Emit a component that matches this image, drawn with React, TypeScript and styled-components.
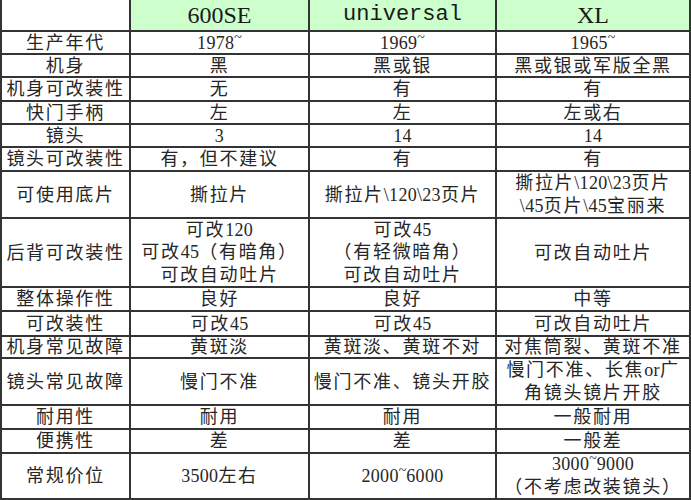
import React from "react";
import styled, { createGlobalStyle } from "styled-components";

const GlobalStyle = createGlobalStyle`
  html, body {
    margin: 0;
    padding: 0;
    background: #ffffff;
  }
`;

const Sheet = styled.div`
  width: 691px;
  box-sizing: border-box;
  display: flex;
  flex-direction: column;
  gap: 2px;
  padding: 0 2px 2px 2px;
  background: #333333;
  font-family: "Liberation Serif", "Noto Sans CJK SC", serif;
  color: #262626;
`;

const Row = styled.div<{ $h: number }>`
  display: grid;
  grid-template-columns: 127px 177px 185px 192px;
  grid-template-rows: ${(p) => p.$h}px;
  gap: 2px;
  height: ${(p) => p.$h}px;
`;

const Cell = styled.div<{ $lines: number }>`
  display: flex;
  flex-direction: column;
  align-items: center;
  justify-content: center;
  min-height: 0;
  text-align: center;
  white-space: nowrap;
  overflow: visible;
  background: #ffffff;
  font-size: 18px;
  letter-spacing: 1.7px;
  line-height: ${(p) => (p.$lines >= 3 ? 22.5 : p.$lines === 2 ? 23 : 20)}px;
`;

const HeadCell = styled.div<{ $green: boolean; $mono?: boolean }>`
  display: flex;
  align-items: center;
  justify-content: center;
  background: ${(p) => (p.$green ? "#ccffcc" : "#ffffff")};
  font-family: ${(p) =>
    p.$mono ? '"Liberation Mono", monospace' : '"Liberation Serif", serif'};
  font-size: ${(p) => (p.$mono ? "22px" : "24px")};
  line-height: 30px;
  color: #1a1a1a;
`;

const Line = styled.span`
  display: block;
`;

const Latin = styled.span`
  letter-spacing: 0.3px;
`;

const Tilde = styled.span`
  display: inline-block;
  vertical-align: 0.5em;
  font-size: 14px;
  line-height: 0;
  letter-spacing: 0;
`;

type RowData = { h: number; cells: string[] };

const header = { h: 30, cells: ["", "600SE", "universal", "XL"] };

const rows: RowData[] = [
  { h: 21, cells: ["生产年代", "1978~", "1969~", "1965~"] },
  { h: 21, cells: ["机身", "黑", "黑或银", "黑或银或军版全黑"] },
  { h: 22, cells: ["机身可改装性", "无", "有", "有"] },
  { h: 21, cells: ["快门手柄", "左", "左", "左或右"] },
  { h: 21, cells: ["镜头", "3", "14", "14"] },
  { h: 22, cells: ["镜头可改装性", "有，但不建议", "有", "有"] },
  {
    h: 45,
    cells: [
      "可使用底片",
      "撕拉片",
      "撕拉片\\120\\23页片",
      "撕拉片\\120\\23页片\n\\45页片\\45宝丽来",
    ],
  },
  {
    h: 67,
    cells: [
      "后背可改装性",
      "可改120\n可改45（有暗角）\n可改自动吐片",
      "可改45\n（有轻微暗角）\n可改自动吐片",
      "可改自动吐片",
    ],
  },
  { h: 22, cells: ["整体操作性", "良好", "良好", "中等"] },
  { h: 23, cells: ["可改装性", "可改45", "可改45", "可改自动吐片"] },
  { h: 20, cells: ["机身常见故障", "黄斑淡", "黄斑淡、黄斑不对", "对焦筒裂、黄斑不准"] },
  {
    h: 45,
    cells: [
      "镜头常见故障",
      "慢门不准",
      "慢门不准、镜头开胶",
      "慢门不准、长焦or广\n角镜头镜片开胶",
    ],
  },
  { h: 22, cells: ["耐用性", "耐用", "耐用", "一般耐用"] },
  { h: 22, cells: ["便携性", "差", "差", "一般差"] },
  { h: 44, cells: ["常规价位", "3500左右", "2000~6000", "3000~9000\n（不考虑改装镜头）"] },
];

function renderRuns(text: string) {
  const runs = text.match(/[\x20-\x7d]+|[^\x20-\x7d]+/g) || [];
  return runs.map((run, i) =>
    /^[\x20-\x7d]/.test(run) ? <Latin key={i}>{run}</Latin> : <React.Fragment key={i}>{run}</React.Fragment>
  );
}

function renderLine(text: string, key: number) {
  const parts = text.split("~");
  return (
    <Line key={key}>
      {parts.map((p, i) => (
        <React.Fragment key={i}>
          {renderRuns(p)}
          {i < parts.length - 1 && <Tilde>~</Tilde>}
        </React.Fragment>
      ))}
    </Line>
  );
}

export default function App() {
  return (
    <>
      <GlobalStyle />
      <Sheet>
        <Row $h={header.h}>
          {header.cells.map((c, i) => (
            <HeadCell key={i} $green={i > 0} $mono={c === "universal"}>
              {c}
            </HeadCell>
          ))}
        </Row>
        {rows.map((r, ri) => (
          <Row key={ri} $h={r.h}>
            {r.cells.map((c, ci) => {
              const lines = c.split("\n");
              return (
                <Cell key={ci} $lines={lines.length}>
                  {lines.map((l, li) => renderLine(l, li))}
                </Cell>
              );
            })}
          </Row>
        ))}
      </Sheet>
    </>
  );
}
